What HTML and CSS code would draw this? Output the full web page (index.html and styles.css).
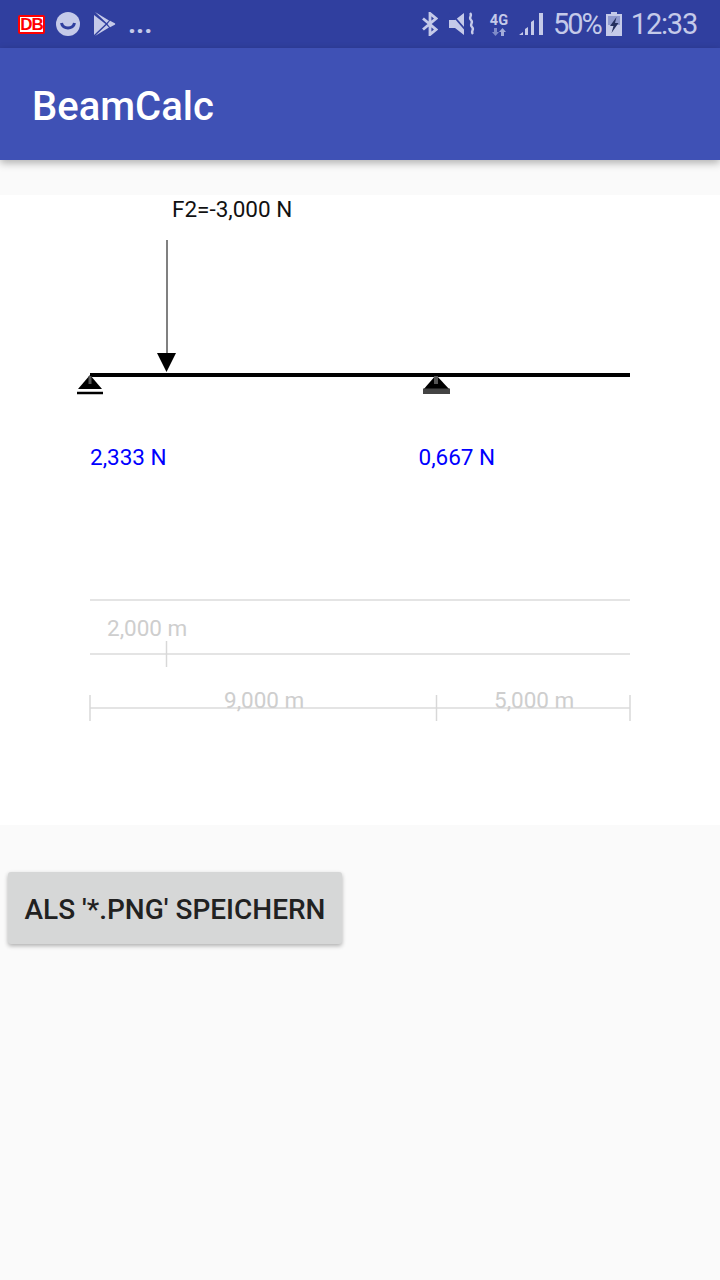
FILE: index.html
```html
<!DOCTYPE html>
<html lang="en">
<head>
    <meta charset="UTF-8">
    <meta name="viewport" content="width=device-width, initial-scale=1.0">
    <title>BeamCalc</title>
    <link rel="stylesheet" href="styles.css">
</head>
<body>
    <div class="status-bar">
        <div class="status-left">
            <span class="db-logo">DB</span>
            <svg class="icon" width="24" height="24" viewBox="0 0 24 24">
                <circle cx="12" cy="12" r="12" fill="#c5cae9"/>
                <path d="M5.500 11c1 6.500 12 6.500 13 0" fill="none" stroke="#303f9f" stroke-width="3"/>
            </svg>
            <svg class="icon play" width="22" height="24" viewBox="0 0 22 24">
                <path d="M0 3l11.500 9L0 23z" fill="#c5cae9"/>
                <path d="M1 0l14 8.500-2.500 2.500zM1 24l14-8.500-2.500-2.500z" fill="#c5cae9"/>
                <path d="M16 8.800l4.800 2.400q1 .8 0 1.600L16 15.200 13.500 12z" fill="#c5cae9"/>
            </svg>
            <span class="more">...</span>
        </div>
        <div class="status-right">
            <svg class="icon" width="16" height="24" viewBox="0 0 16 24">
                <path d="M1 6.500L14 17.500 8 22.500V1.500l6 5L1 17.500" fill="none" stroke="#c5cae9" stroke-width="2.800"/>
            </svg>
            <svg class="icon mute" width="26" height="24" viewBox="0 0 26 24">
                <path d="M0 8h6l9-7v22l-9-7H0z" fill="#c5cae9"/>
                <path d="M1 0l19 22" stroke="#303f9f" stroke-width="1.800"/>
                <path d="M21 1c3 3-2 4 1 7s-2 4 1 7-2 4 1 7" fill="none" stroke="#c5cae9" stroke-width="2.400"/>
            </svg>
            <div class="net">
                <span class="net-label">4G</span>
                <svg width="14" height="8" viewBox="0 0 14 8">
                    <path d="M3.500 8L0 4h2V0h3v4h2z" fill="#7f8bc9"/>
                    <path d="M10.500 0L14 4h-2v4H9V4H7z" fill="#a3acd9"/>
                </svg>
            </div>
            <svg class="icon signal" width="24" height="24" viewBox="0 0 24 24">
                <path d="M0 23l4-3v3zM6 23v-6l3-2v8zM12 23V10l3-2v15zM20 23V1h4v22z" fill="#c5cae9"/>
            </svg>
            <span class="battery-text">50%</span>
            <svg class="icon battery" width="16" height="24" viewBox="0 0 16 24">
                <path d="M5 0h6v2h5v22H0V2h5z" fill="#c5cae9"/>
                <path d="M2 4h12v9H2z" fill="#8f99cf"/>
                <path d="M10.500 5L4 14h3.500L5.500 21 12.500 11H9z" fill="#252f5e"/>
            </svg>
            <span class="clock">12:33</span>
        </div>
    </div>

    <header class="toolbar">BeamCalc</header>

    <div class="beam-view">
        <svg width="720" height="630" viewBox="0 0 720 630">
            <text class="label" x="172" y="22">F2=-3,000 N</text>
            <line x1="167" y1="45" x2="167" y2="162" stroke="#808080" stroke-width="2"/>
            <polygon points="157,158 176,158 166.500,177" fill="#000"/>
            <line x1="90" y1="180" x2="630" y2="180" stroke="#000" stroke-width="4"/>

            <polygon points="90,180 78,194 102,194" fill="#000"/>
            <line x1="90" y1="181" x2="90" y2="189" stroke="#555" stroke-width="3"/>
            <line x1="77" y1="198" x2="103" y2="198" stroke="#000" stroke-width="2.500"/>

            <polygon points="436,180 423,195 450,195" fill="#000"/>
            <line x1="436" y1="181" x2="436" y2="189" stroke="#555" stroke-width="4"/>
            <rect x="423" y="193.500" width="27" height="5.500" fill="#444"/>

            <text class="label reaction" x="90" y="270">2,333 N</text>
            <text class="label reaction" x="418.500" y="270">0,667 N</text>

            <g stroke="#e4e4e4" stroke-width="2">
                <line x1="90" y1="405" x2="630" y2="405"/>
                <line x1="90" y1="459" x2="630" y2="459"/>
                <line x1="90" y1="513" x2="630" y2="513"/>
            </g>
            <g stroke="#d8d8d8" stroke-width="1.500">
                <line x1="166.500" y1="446" x2="166.500" y2="472"/>
                <line x1="90" y1="500" x2="90" y2="526"/>
                <line x1="436.500" y1="500" x2="436.500" y2="526"/>
                <line x1="630" y1="500" x2="630" y2="526"/>
            </g>
            <text class="label dim" x="107" y="441">2,000 m</text>
            <text class="label dim" x="224" y="513">9,000 m</text>
            <text class="label dim" x="494" y="513">5,000 m</text>
        </svg>
    </div>

    <button class="save-btn">ALS '*.PNG' SPEICHERN</button>
</body>
</html>
```

FILE: styles.css
```css
body {
    margin: 0;
    width: 720px;
    height: 1280px;
    overflow: hidden;
    background-color: #fafafa;
    font-family: Roboto, sans-serif;
}
.status-bar {
    height: 48px;
    background-color: #303f9f;
    color: #c5cae9;
    display: flex;
    justify-content: space-between;
    align-items: center;
}
.status-left {
    display: flex;
    align-items: center;
    padding-left: 18px;
}
.status-right {
    display: flex;
    align-items: center;
    padding-right: 23px;
}
.icon {
    display: block;
    flex-shrink: 0;
}
.db-logo {
    width: 27px;
    height: 19px;
    box-sizing: border-box;
    border: 2px solid #f00;
    border-radius: 2px;
    background-color: #fff;
    color: #f00;
    font-family: "Liberation Sans", sans-serif;
    font-size: 17px;
    font-weight: bold;
    letter-spacing: -1px;
    line-height: 15px;
    text-align: center;
    margin-right: 11px;
}
.status-left .icon {
    margin-right: 14px;
}
.status-left .play {
    margin-right: 12px;
}
.more {
    font-size: 28px;
    font-weight: 700;
    line-height: 24px;
}
.status-right .icon {
    margin-right: 11px;
}
.status-right .mute {
    margin-right: 15px;
}
.net {
    width: 18px;
    margin-right: 11px;
    display: flex;
    flex-direction: column;
    align-items: center;
}
.net-label {
    font-size: 14.500px;
    font-weight: bold;
    line-height: 15px;
}
.status-right .signal {
    margin-right: 10px;
}
.battery-text {
    font-size: 29px;
    letter-spacing: -2px;
    line-height: 32px;
    margin-right: 5px;
}
.status-right .battery {
    margin-right: 9px;
}
.clock {
    font-size: 29px;
    letter-spacing: -1.200px;
    line-height: 32px;
}
.toolbar {
    height: 112px;
    box-sizing: border-box;
    padding-left: 32px;
    background-color: #3f51b5;
    color: #fff;
    font-size: 40px;
    font-weight: 500;
    line-height: 118px;
    box-shadow: 0 3px 8px rgba(0, 0, 0, 0.3);
    position: relative;
}
.beam-view {
    margin-top: 35px;
    height: 630px;
    background-color: #fff;
}
.beam-view svg {
    display: block;
}
.label {
    font-family: Roboto, sans-serif;
    font-size: 22.500px;
    fill: #111;
}
.reaction {
    fill: #0000ff;
}
.dim {
    fill: #cecece;
}
.save-btn {
    display: block;
    margin: 47px 0 0 8px;
    width: 334px;
    height: 72px;
    padding: 2px 0 0;
    border: none;
    border-radius: 3px;
    background-color: #d6d7d7;
    color: #212121;
    font-family: Roboto, sans-serif;
    font-size: 28px;
    font-weight: 500;
    box-shadow: 0 2px 4px rgba(0, 0, 0, 0.3);
}
```
